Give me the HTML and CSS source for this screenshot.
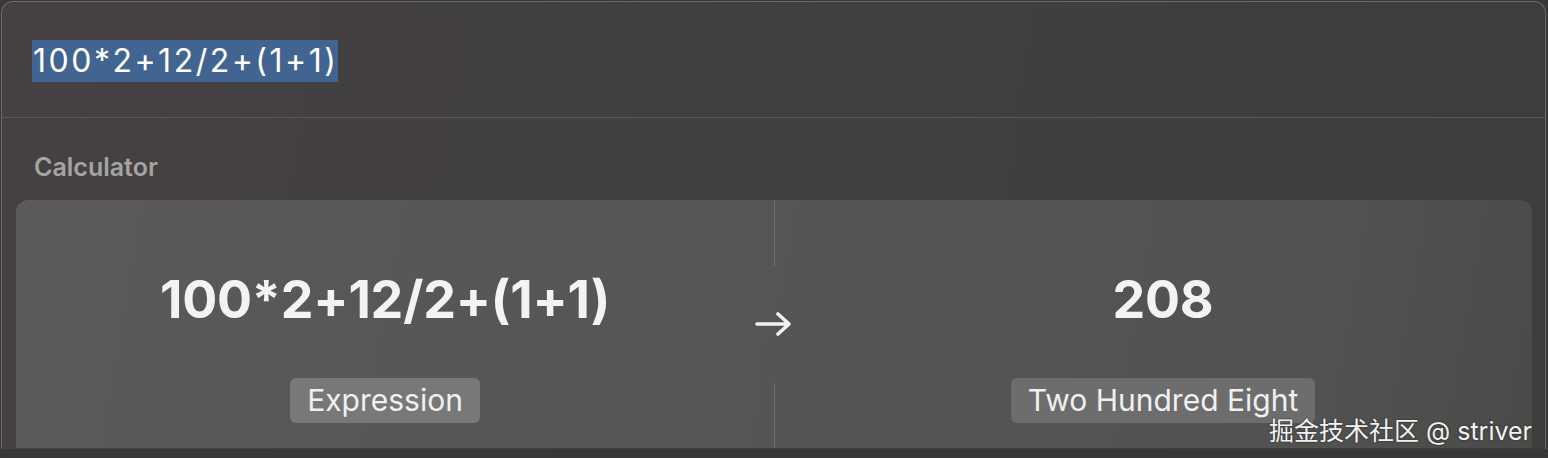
FILE: index.html
```html
<!DOCTYPE html>
<html>
<head>
    <title>Calculator</title>
    <link rel="stylesheet" href="styles.css">
</head>
<body>
    <div class="window">
        <div class="search-bar">
            <span class="query">100*2+12/2+(1+1)</span>
        </div>
        <div class="section-title">Calculator</div>
        <div class="result-card">
            <div class="side">
                <div class="value">100*2+12/2+(1+1)</div>
                <div class="tag">Expression</div>
            </div>
            <div class="middle">
                <div class="line"></div>
                <svg class="arrow" width="40" height="30" viewBox="0 0 40 30">
                    <path d="M3 15 H35 M24 5 L35 15 L24 25" fill="none" stroke="#f2f2f2" stroke-width="3.6" stroke-linecap="round" stroke-linejoin="round"/>
                </svg>
                <div class="line"></div>
            </div>
            <div class="side">
                <div class="value">208</div>
                <div class="tag">Two Hundred Eight</div>
            </div>
        </div>
    </div>
    <div class="watermark">掘金技术社区 @ striver</div>
</body>
</html>
```

FILE: styles.css
```css
body {
    margin: 0;
    height: 458px;
    overflow: hidden;
    background-color: #383837;
    font-family: 'Inter', 'Noto Sans CJK SC', sans-serif;
    position: relative;
}
.window {
    margin-left: 1px;
    margin-right: 2px;
    margin-top: 1px;
    height: 447px;
    border: 1px solid #6b6a6a;
    border-bottom: none;
    border-radius: 12px 12px 0 0;
    background: linear-gradient(100deg, #454142 0%, #423f40 40%, #3d3d3b 100%);
}
.search-bar {
    height: 116px;
    padding-left: 30px;
    box-sizing: border-box;
    padding-top: 38px;
    border-bottom: 1px solid #595757;
}
.query {
    display: inline-block;
    background-color: #416590;
    color: #ffffff;
    font-size: 32px;
    line-height: 42px;
    padding: 0 0 0 1px;
    letter-spacing: 2.5px;
}
.section-title {
    color: #a6a3a4;
    font-size: 25px;
    font-weight: 600;
    padding: 34px 0 0 32px;
    height: 48px;
}
.result-card {
    margin: 0 13px 0 14px;
    height: 248px;
    border-radius: 12px 12px 0 0;
    background: linear-gradient(100deg, #5b595a 0%, #555555 50%, #525251 85%, #4a4a48 100%);
    display: flex;
}
.side {
    flex: 1;
    display: flex;
    flex-direction: column;
    align-items: center;
}
.value {
    margin-top: 71px;
    color: #f3f3f3;
    font-size: 52px;
    font-weight: 700;
    line-height: 58px;
    letter-spacing: -0.2px;
}
.tag {
    margin-top: 49px;
    background-color: #787878;
    color: #f0f0f0;
    font-size: 30px;
    line-height: 45px;
    padding: 0 17px;
    border-radius: 6px;
}
.side:last-child .tag {
    background-color: #6d6d6d;
}
.middle {
    width: 40px;
    display: flex;
    flex-direction: column;
    align-items: center;
}
.line {
    width: 1px;
    flex: 1;
    background-color: #6e6e6e;
}
.arrow {
    margin: 43px 0 44px;
}
.watermark {
    position: absolute;
    right: 16px;
    top: 411px;
    color: #f2f2f2;
    font-size: 25px;
    text-shadow: 0 0 2px #222;
}
```
